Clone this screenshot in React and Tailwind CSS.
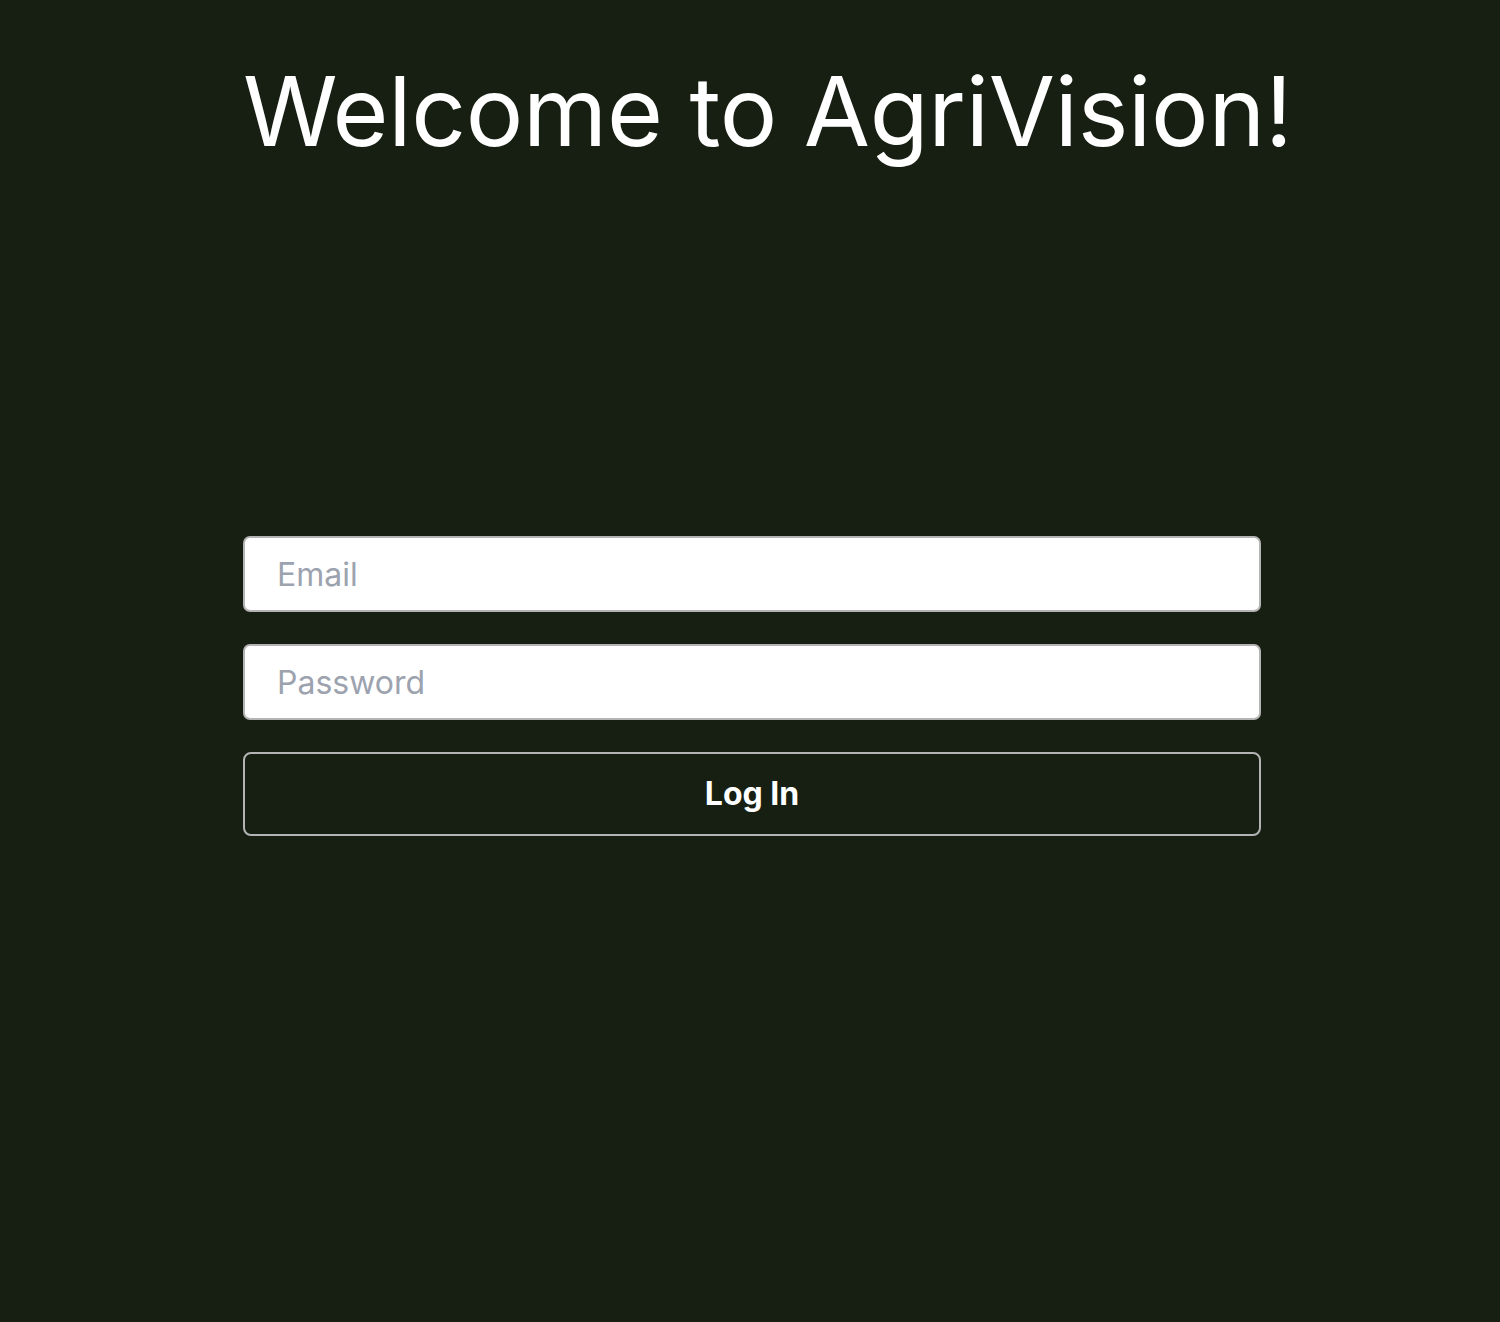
// App.jsx
const font = { fontFamily: 'Inter, "Noto Sans", sans-serif' };

function LoginForm() {
  return (
    <form className="flex flex-col gap-[32px] w-[1018px]" onSubmit={(e) => e.preventDefault()}>
      <input
        type="email"
        placeholder="Email"
        className="h-[76px] w-full rounded-[7px] border-2 border-[#b4b4b4] bg-white px-[32px] text-[32px] text-gray-900 placeholder:text-[#9ca3af] outline-none"
      />
      <input
        type="password"
        placeholder="Password"
        className="h-[76px] w-full rounded-[7px] border-2 border-[#b4b4b4] bg-white px-[32px] text-[32px] text-gray-900 placeholder:text-[#9ca3af] outline-none"
      />
      <button
        type="submit"
        className="h-[84px] w-full rounded-lg border-2 border-[#b4b4b4] bg-transparent text-[32px] font-bold text-white"
      >
        Log In
      </button>
    </form>
  );
}

export default function App() {
  return (
    <div style={font} className="min-h-[1322px] w-full bg-[#161f12] flex flex-col pl-[243px]">
      <div className="pt-[54px]">
        <h1 className="text-[96px] leading-[1.2] tracking-[-0.25px] font-normal text-white whitespace-nowrap">
          Welcome to AgriVision!
        </h1>
      </div>
      <div className="mt-[367px]">
        <LoginForm />
      </div>
    </div>
  );
}
